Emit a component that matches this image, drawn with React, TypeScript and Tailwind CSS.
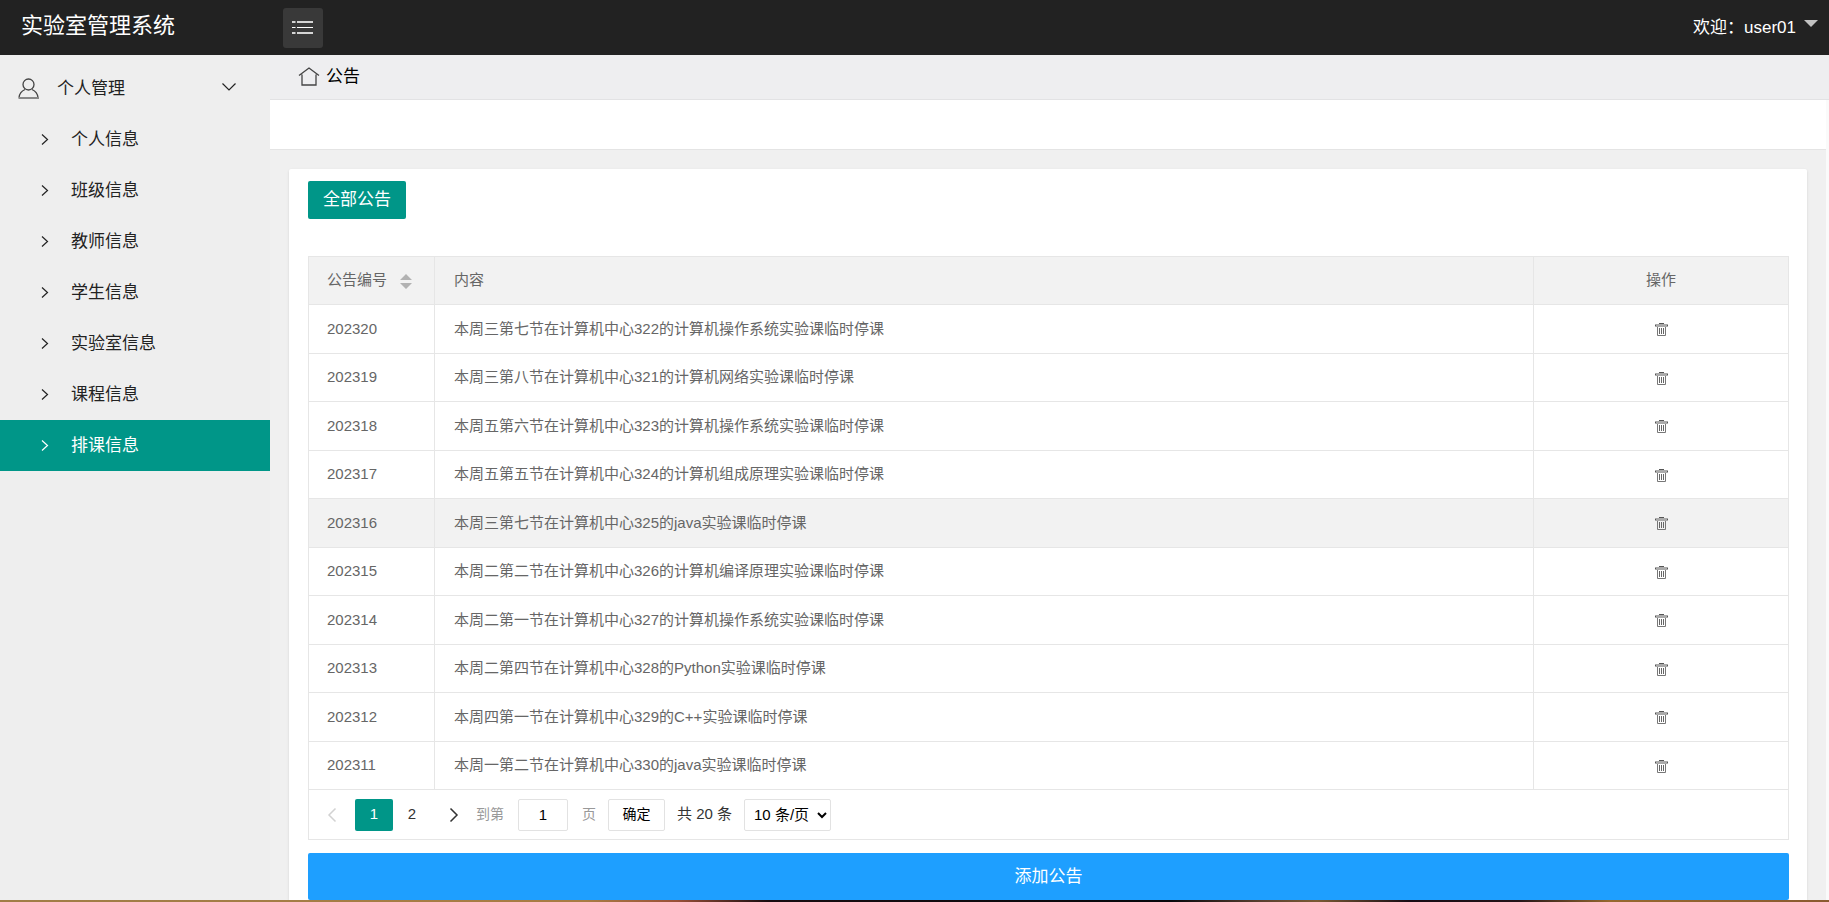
import React from 'react';

type Notice = { id: number; content: string };

const menuItems = ['个人信息', '班级信息', '教师信息', '学生信息', '实验室信息', '课程信息', '排课信息'];

const notices: Notice[] = [
  { id: 202320, content: '本周三第七节在计算机中心322的计算机操作系统实验课临时停课' },
  { id: 202319, content: '本周三第八节在计算机中心321的计算机网络实验课临时停课' },
  { id: 202318, content: '本周五第六节在计算机中心323的计算机操作系统实验课临时停课' },
  { id: 202317, content: '本周五第五节在计算机中心324的计算机组成原理实验课临时停课' },
  { id: 202316, content: '本周三第七节在计算机中心325的java实验课临时停课' },
  { id: 202315, content: '本周二第二节在计算机中心326的计算机编译原理实验课临时停课' },
  { id: 202314, content: '本周二第一节在计算机中心327的计算机操作系统实验课临时停课' },
  { id: 202313, content: '本周二第四节在计算机中心328的Python实验课临时停课' },
  { id: 202312, content: '本周四第一节在计算机中心329的C++实验课临时停课' },
  { id: 202311, content: '本周一第二节在计算机中心330的java实验课临时停课' },
];

const HOVERED_ID = 202316;

const Chevron: React.FC<{ className: string; d: string; width?: number }> = ({ className, d, width = 1.5 }) => (
  <svg className={className} viewBox="0 0 16 16" fill="none" stroke="currentColor" strokeWidth={width}>
    <path d={d} />
  </svg>
);

const RIGHT = 'M5 2.500l5.500 5L5 12.500';
const LEFT = 'M11.500 1.500L5 8l6.500 6.500';
const NEXT = 'M4.500 1.500L11 8l-6.500 6.500';

const TrashIcon = () => (
  <svg className="h-4 w-4" viewBox="0 0 16 16" fill="none" stroke="#777">
    <path d="M6 2.500h5" stroke="#555" />
    <path d="M2 4.500h13" stroke="#aaa" strokeWidth="3" />
    <path d="M2 4.500h1M14 4.500h1" stroke="#555" />
    <path d="M4.500 6v8.500h8V6" />
    <path d="M6.500 7v6M8.500 7v6M10.500 7v6" stroke="#666" />
  </svg>
);

const Header = () => (
  <header className="flex h-[55px] shrink-0 items-center bg-[#222] text-white">
    <h1 className="w-[283px] pb-1 pl-[21px] text-[22px]">实验室管理系统</h1>
    <button
      type="button"
      aria-label="菜单"
      className="flex h-10 w-10 items-center justify-center rounded-[3px] bg-[#393939] text-[#d5d5d5]"
    >
      <svg className="h-5 w-[22px]" viewBox="0 0 22 20" fill="none" stroke="currentColor" strokeWidth="2">
        <path d="M0 4h3.500M5 4h16M0 15h3.500M5 15h16" />
        <path d="M0 9.500h3.500M5 9.500h16" stroke="#fff" strokeWidth="1" />
      </svg>
    </button>
    <button type="button" className="ml-auto flex items-center gap-2 pr-[11px] text-[17px]">
      欢迎：user01
      <svg className="mb-2 h-[7px] w-[14px]" viewBox="0 0 14 7" fill="#c2c2c2">
        <path d="M0 0h14L7 7z" />
      </svg>
    </button>
  </header>
);

const Sidebar = () => (
  <nav className="w-[270px] shrink-0 bg-[#eee] text-[17px] text-[#222]">
    <button type="button" className="flex h-[59px] w-full items-center pt-[9px] pl-[18px]">
      <svg className="h-[22px] w-[22px]" viewBox="0 0 22 22" fill="none" stroke="#444" strokeWidth="1.3">
        <circle cx="10.5" cy="6.500" r="5.500" />
        <path d="M7 11.500C3.500 13 1.500 15.500 1 19.500M14 11.500c3.500 1.500 5.500 4 6 8" />
        <path d="M0.500 20h20.500" stroke="#888" strokeWidth="2" />
      </svg>
      <span className="ml-[17px]">个人管理</span>
      <Chevron className="mr-[33px] mb-1 ml-auto h-4 w-4" d="M1.500 4.500L8 11l6.500-6.500" width={1.200} />
    </button>
    <ul>
      {menuItems.map((item) => (
        <li key={item}>
          <a
            href="#"
            className={`flex h-[51px] items-center gap-[18px] pl-[37px] ${
              item === '排课信息' ? 'bg-[#009688] text-white' : ''
            }`}
          >
            <Chevron className="h-4 w-4" d={RIGHT} width={1.200} />
            {item}
          </a>
        </li>
      ))}
    </ul>
  </nav>
);

const NoticeTable = () => (
  <table className="w-full table-fixed border-collapse border border-[#e6e6e6] text-left text-[15px] text-[#666]">
    <colgroup>
      <col className="w-[126px]" />
      <col />
      <col className="w-[255px]" />
    </colgroup>
    <thead>
      <tr className="h-12 bg-[#f2f2f2]">
        <th className="border border-[#e6e6e6] px-[18px] font-normal">
          <span className="flex items-center gap-[13px]">
            公告编号
            <svg className="h-4 w-3" viewBox="0 0 12 16" fill="#b2b2b2">
              <path d="M6 1l6 6H0zM0 10h12l-6 6z" />
            </svg>
          </span>
        </th>
        <th className="border border-[#e6e6e6] px-[19px] font-normal">内容</th>
        <th className="border border-[#e6e6e6] text-center font-normal">操作</th>
      </tr>
    </thead>
    <tbody>
      {notices.map((notice) => (
        <tr key={notice.id} className={`odd:h-[49px] even:h-12 ${notice.id === HOVERED_ID ? 'bg-[#f2f2f2]' : ''}`}>
          <td className="border border-[#e6e6e6] px-[18px]">{notice.id}</td>
          <td className="border border-[#e6e6e6] px-[19px]">{notice.content}</td>
          <td className="border border-[#e6e6e6]">
            <button type="button" aria-label="删除" className="mx-auto block">
              <TrashIcon />
            </button>
          </td>
        </tr>
      ))}
    </tbody>
  </table>
);

const Pagination = () => (
  <div className="flex h-[50px] items-center border border-t-0 border-[#e6e6e6] text-[15px] text-[#333]">
    <button type="button" aria-label="上一页" disabled className="flex w-[46px] justify-center text-[#d2d2d2]">
      <Chevron className="h-4 w-4" d={LEFT} />
    </button>
    <button type="button" className="h-8 w-[38px] rounded-[2px] bg-[#009688] text-white">
      1
    </button>
    <button type="button" className="h-8 w-[38px]">
      2
    </button>
    <button type="button" aria-label="下一页" className="flex w-[45px] justify-center">
      <Chevron className="h-4 w-4" d={NEXT} />
    </button>
    <label className="flex items-center gap-3.5 text-[14px] text-[#999]">
      到第
      <input
        type="text"
        defaultValue="1"
        className="h-8 w-[50px] rounded-[2px] border border-[#e2e2e2] bg-white text-center text-[15px] text-black"
      />
      页
    </label>
    <button type="button" className="ml-3 h-8 w-[57px] rounded-[2px] border border-[#e2e2e2] text-[14px] text-black">
      确定
    </button>
    <span className="ml-3">共 20 条</span>
    <select
      aria-label="每页条数"
      className="ml-3 h-8 w-[87px] rounded-[2px] border border-[#e2e2e2] bg-white pl-[5px] text-[15px] text-black"
    >
      <option>10 条/页</option>
    </select>
  </div>
);

const App: React.FC = () => (
  <div className="flex h-screen flex-col overflow-hidden font-['Liberation_Sans','Noto_Sans_CJK_SC',sans-serif]">
    <Header />
    <div className="flex min-h-0 flex-1">
      <Sidebar />
      <div className="flex min-w-0 flex-1 flex-col">
        <div className="flex h-[45px] shrink-0 items-center gap-1.5 border-b border-[#e2e2e4] bg-[#eeeef0] pl-7 text-[17px] text-black">
          <svg className="h-5 w-[22px]" viewBox="0 0 22 20" fill="none" stroke="#444" strokeWidth="1.3">
            <path d="M1 8.500L11 1l10 7.500M4 7.500v10.500h14V7.500" />
          </svg>
          公告
        </div>
        <div className="flex min-h-0 flex-1 flex-col border-r-3 border-[#fafafa] bg-[#f0f0f0]">
          <div className="h-[50px] shrink-0 border-b border-[#e4e4e4] bg-white" />
          <main className="mx-[19px] mt-[19px] flex-1 rounded-t-[2px] bg-white pt-3 pr-[18px] pl-[19px] shadow-sm">
            <button type="button" className="mb-[37px] block h-[38px] w-[98px] rounded-[2px] bg-[#009688] text-[17px] text-white">
              全部公告
            </button>
            <NoticeTable />
            <Pagination />
            <button type="button" className="mt-[13px] h-[47px] w-full rounded-[2px] bg-[#1e9fff] text-[17px] text-white">
              添加公告
            </button>
          </main>
        </div>
      </div>
    </div>
    <div className="h-0.5 shrink-0 bg-[linear-gradient(90deg,#a07d46,#a87c44_32%,#9a5038_37%,#180c10_42%,#08080c_64%,#5a4030_69%,#7a5a34_72%,#180c14_77%,#241418_83%,#96682f_88%,#8a5a30)]" />
  </div>
);

export default App;
